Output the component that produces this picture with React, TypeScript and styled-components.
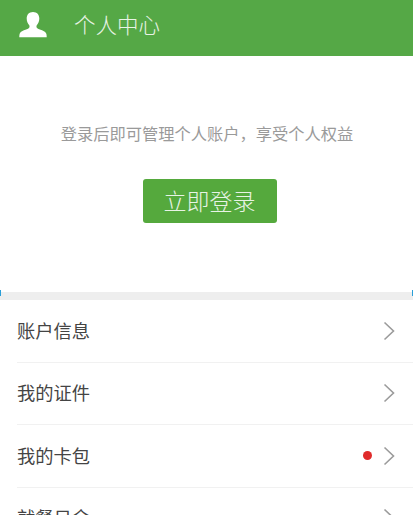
import { createGlobalStyle } from "styled-components";
import styled from "styled-components";

const GlobalStyle = createGlobalStyle`
  html, body {
    margin: 0;
    padding: 0;
    background: #fff;
    overflow: hidden;
  }
  body {
    font-family: "Noto Sans CJK SC", "Liberation Sans", sans-serif;
  }
`;

const items = [
  { label: "账户信息", dot: false },
  { label: "我的证件", dot: false },
  { label: "我的卡包", dot: true },
  { label: "就餐日余", dot: false },
];

export default function App() {
  return (
    <Page>
      <GlobalStyle />
      <Header>
        <UserIcon viewBox="0 0 28 26">
          <path d="M14 0c-4 0-6.3 2.8-6.3 6.6 0 2.8 1 5 2.5 6.6.5.6.5 2.2-.3 2.9C8.2 17.9 1.5 18.6.6 22c-.3 1.2-.3 2.4-.3 3.2h27.4c0-.8 0-2-.3-3.2-.9-3.4-7.6-4.1-9.3-5.900-.8-.7-.8-2.300-.3-2.900 1.500-1.600 2.500-3.800 2.500-6.600C20.300 2.800 18 0 14 0z" />
        </UserIcon>
        <HeaderTitle>个人中心</HeaderTitle>
      </Header>
      <LoginPanel>
        <Prompt>登录后即可管理个人账户，享受个人权益</Prompt>
        <LoginButton>立即登录</LoginButton>
      </LoginPanel>
      <Divider>
        <EdgeTick $side="left" />
        <EdgeTick $side="right" />
      </Divider>
      <List>
        {items.map((item) => (
          <Row key={item.label}>
            <RowLabel>{item.label}</RowLabel>
            {item.dot && <Dot />}
            <Chevron viewBox="0 0 12 20">
              <path d="M1.5 1.5 10.5 10 1.5 18.5" />
            </Chevron>
          </Row>
        ))}
      </List>
    </Page>
  );
}

const Page = styled.div`
  width: 413px;
  height: 515px;
  overflow: hidden;
`;

const Header = styled.header`
  height: 56px;
  background: #55a846;
  display: flex;
  align-items: center;
  padding-left: 19px;
  padding-bottom: 7px;
  box-sizing: border-box;
`;

const UserIcon = styled.svg`
  width: 28px;
  height: 26px;
  fill: #fff;
`;

const HeaderTitle = styled.div`
  margin-left: 27px;
  margin-bottom: 2px;
  font-size: 21.5px;
  font-weight: 300;
  color: #e8f3e5;
`;

const LoginPanel = styled.section`
  height: 236px;
  display: flex;
  flex-direction: column;
  align-items: center;
  padding-top: 64px;
  box-sizing: border-box;
`;

const Prompt = styled.div`
  font-size: 16.25px;
  line-height: 26px;
  color: #9a9a9a;
  margin-left: 1px;
`;

const LoginButton = styled.button`
  margin-top: 33px;
  margin-left: 6px;
  width: 134px;
  height: 44px;
  padding: 0 0 3px;
  border: 0;
  border-radius: 3px;
  background: #55a93d;
  color: #e8f3e5;
  font-family: inherit;
  font-size: 23px;
  font-weight: 300;
`;

const Divider = styled.div`
  position: relative;
  height: 8px;
  background: #eeeeee;
`;

const EdgeTick = styled.span<{ $side: "left" | "right" }>`
  position: absolute;
  top: -2px;
  ${(p) => p.$side}: 0;
  width: 1px;
  height: 6px;
  background: #2a9fd8;
`;

const List = styled.div`
  padding-left: 17px;
`;

const Row = styled.div`
  height: 62.5px;
  display: flex;
  align-items: center;
  padding-right: 18px;
  box-sizing: border-box;
  border-bottom: 1px solid #f1f1f1;
`;

const RowLabel = styled.div`
  flex: 1;
  margin-bottom: 2px;
  font-size: 18.25px;
  color: #444;
`;

const Dot = styled.span`
  width: 9px;
  height: 9px;
  border-radius: 50%;
  background: #e02b2b;
  margin-right: 11px;
`;

const Chevron = styled.svg`
  width: 12px;
  height: 20px;
  fill: none;
  stroke: #9b9b9b;
  stroke-width: 1.6;
`;
